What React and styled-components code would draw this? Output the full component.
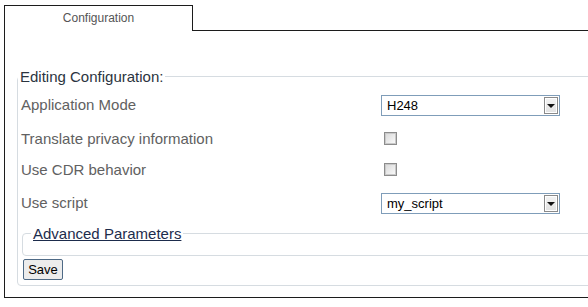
import React from 'react';
import styled, { createGlobalStyle } from 'styled-components';

const GlobalStyle = createGlobalStyle`
  html, body {
    margin: 0;
    padding: 0;
    background: #fff;
    overflow: hidden;
  }
  body {
    font-family: "Liberation Sans", Arial, sans-serif;
  }
`;

const Page = styled.div`
  box-sizing: border-box;
  width: 100%;
  overflow: hidden;
  padding: 5px 0 0 4px;
`;

const TabBar = styled.div`
  display: flex;
  height: 26px;
`;

const Tab = styled.div`
  box-sizing: border-box;
  width: 189px;
  height: 26px;
  border: 1px solid #1c1c1c;
  border-bottom: none;
  display: flex;
  align-items: center;
  justify-content: center;
  padding-bottom: 1px;
  font-size: 12px;
  color: #555;
`;

const TabFiller = styled.div`
  flex: 1;
  box-sizing: border-box;
  height: 26px;
  border-bottom: 1px solid #1c1c1c;
`;

const Panel = styled.div`
  border-left: 1px solid #1c1c1c;
  border-bottom: 1px solid #1c1c1c;
  padding: 37px 0 11px 12px;
`;

const FieldSet = styled.fieldset`
  margin: 0;
  padding: 0 0 5px 3px;
  width: 640px;
  border: 1px solid #d6dce1;
  border-radius: 4px;
  min-inline-size: 0;
`;

const Legend = styled.legend`
  padding: 0 2px;
  margin-left: -3px;
  font-size: 15px;
  line-height: 17px;
  color: #2b3440;
`;

const Rows = styled.div`
  display: grid;
  grid-template-columns: 360px 1fr;
  padding-top: 2px;
`;

const Label = styled.div`
  height: ${p => p.$h}px;
  display: flex;
  align-items: center;
  padding-bottom: 1px;
  box-sizing: border-box;
  font-size: 15px;
  color: #616161;
`;

const Control = styled.div`
  height: ${p => p.$h}px;
  display: flex;
  align-items: center;
`;

const SelectBox = styled.div`
  box-sizing: border-box;
  width: 179px;
  height: 21px;
  border: 1px solid #7f9db9;
  display: flex;
  align-items: center;
  justify-content: space-between;
  padding: 0 1px 0 5px;
  font-size: 13px;
  color: #000;
  background: #fff;
`;

const ArrowButton = styled.span`
  box-sizing: border-box;
  width: 14px;
  height: 17px;
  border: 1px solid #8a8a8a;
  box-shadow: inset 0 0 0 1px #fff;
  background: linear-gradient(#f4f4f4, #e2e2e2);
  display: flex;
  align-items: center;
  justify-content: center;
`;

const Arrow = styled.span`
  width: 0;
  height: 0;
  border-left: 4px solid transparent;
  border-right: 4px solid transparent;
  border-top: 4px solid #111;
  margin-top: 1px;
`;

const CheckBox = styled.span`
  box-sizing: border-box;
  width: 13px;
  height: 13px;
  margin-left: 3px;
  border: 1px solid #8c8c8c;
  box-shadow: inset 0 0 0 1px #c9c9c9;
  background: linear-gradient(135deg, #d8d8d8, #fbfbfb);
`;

const AdvancedSet = styled.fieldset`
  margin: 4px 0 0 1px;
  padding: 0 0 13px;
  border: 1px solid #d6dce1;
  border-radius: 4px;
  min-inline-size: 0;
`;

const AdvancedLegend = styled.legend`
  margin-left: 8px;
  padding: 0 2px;
  font-size: 15px;
  line-height: 17px;
`;

const Link = styled.a`
  color: #1d2c4c;
  text-decoration: underline;
  cursor: pointer;
`;

const SaveButton = styled.button`
  margin: 3px 0 0 2px;
  box-sizing: border-box;
  width: 40px;
  height: 21px;
  padding: 0;
  border: 1px solid #4e6a86;
  border-radius: 2px;
  background: #ececec;
  font-family: "Liberation Sans", Arial, sans-serif;
  font-size: 13px;
  color: #000;
`;

const Select = ({ value }) => (
  <SelectBox>
    <span>{value}</span>
    <ArrowButton><Arrow /></ArrowButton>
  </SelectBox>
);

const rows = [
  { label: 'Application Mode', h: 36, control: <Select value="H248" /> },
  { label: 'Translate privacy information', h: 31, control: <CheckBox /> },
  { label: 'Use CDR behavior', h: 31, control: <CheckBox /> },
  { label: 'Use script', h: 36, control: <Select value="my_script" /> },
];

export default function App() {
  return (
    <Page>
      <GlobalStyle />
      <TabBar>
        <Tab>Configuration</Tab>
        <TabFiller />
      </TabBar>
      <Panel>
        <FieldSet>
          <Legend>Editing Configuration:</Legend>
          <Rows>
            {rows.map(r => (
              <React.Fragment key={r.label}>
                <Label $h={r.h}>{r.label}</Label>
                <Control $h={r.h}>{r.control}</Control>
              </React.Fragment>
            ))}
          </Rows>
          <AdvancedSet>
            <AdvancedLegend><Link>Advanced Parameters</Link></AdvancedLegend>
          </AdvancedSet>
          <SaveButton>Save</SaveButton>
        </FieldSet>
      </Panel>
    </Page>
  );
}
